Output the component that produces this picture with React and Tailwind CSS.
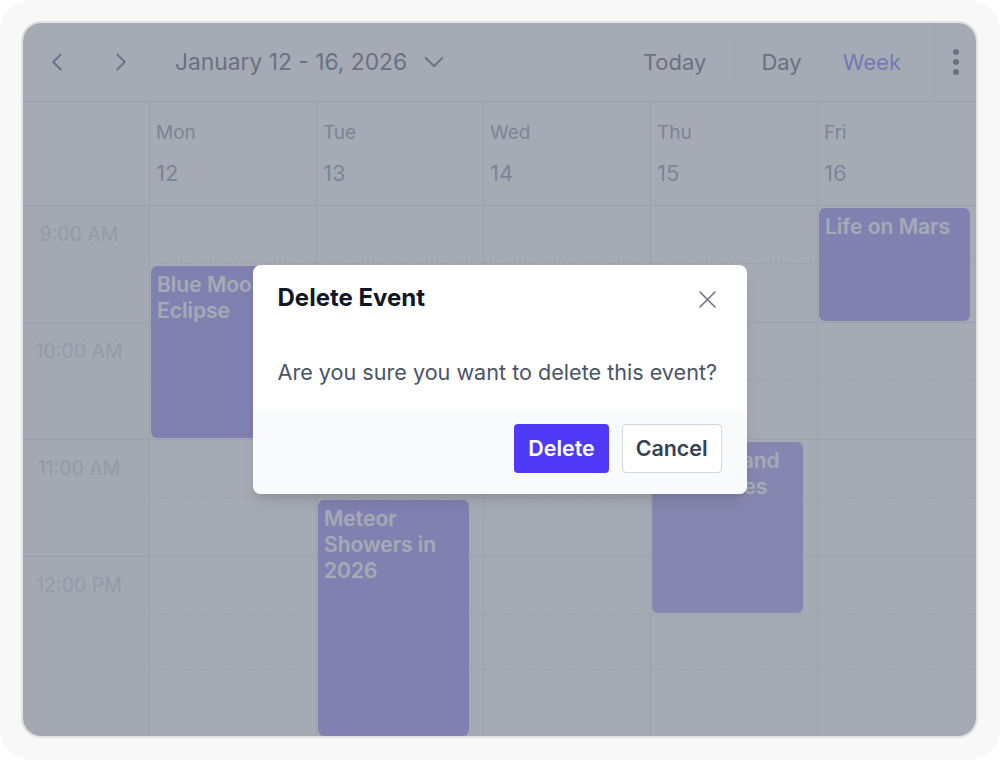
import { ChevronLeft, ChevronRight, ChevronDown } from 'lucide-react'

const HOUR = 117
const START_HOUR = 9

const days = [
  { name: 'Mon', date: 12 },
  { name: 'Tue', date: 13 },
  { name: 'Wed', date: 14 },
  { name: 'Thu', date: 15 },
  { name: 'Fri', date: 16 },
]

const hours = ['9:00 AM', '10:00 AM', '11:00 AM', '12:00 PM']

const events = [
  { day: 0, title: 'Blue Moon Eclipse', start: 9.5, end: 11, tone: 'bg-[#a49af8]' },
  { day: 1, title: 'Meteor Showers in 2026', start: 11.5, end: 13.55, tone: 'bg-[#a49af8]' },
  { day: 2, title: 'Total Solar Eclipse', start: 9.5, end: 11, tone: 'bg-[#a49af8]', narrow: true },
  { day: 3, title: 'Comets and Meteorites', start: 11, end: 12.5, tone: 'bg-[#b0a8f6]' },
  { day: 4, title: 'Life on Mars', start: 9, end: 10, tone: 'bg-[#a49af8]' },
]

// One hour of the grid: a solid line at the bottom, dashed at the half hour.
const HourSlots = ({ last }) =>
  last ? (
    <div className="h-[180px]">
      <div className="h-[58px] border-b border-dashed border-gray-200" />
      <div className="h-[55px] border-b border-dashed border-gray-200" />
    </div>
  ) : (
    <div className="h-[117px] border-b border-gray-200">
      <div className="h-[58px] border-b border-dashed border-gray-200" />
    </div>
  )

const DayColumn = ({ index }) => (
  <div className={`relative h-full shrink-0 ${index < 4 ? 'w-[167px] border-r border-gray-200' : 'flex-1'}`}>
    {hours.map((h, i) => (
      <HourSlots key={h} last={i === hours.length - 1} />
    ))}
    {events
      .filter((e) => e.day === index)
      .map((e) => (
        <div
          key={e.title}
          className={`absolute overflow-hidden rounded-md px-[6px] py-[6px] text-[21px] font-semibold leading-[26px] text-white ${e.tone} ${e.narrow ? 'left-[3px] w-[145px]' : 'left-[1px] w-[151px]'}`}
          style={{ top: (e.start - START_HOUR) * HOUR + 1.5, height: (e.end - e.start) * HOUR - 4 }}
        >
          {e.title}
        </div>
      ))}
  </div>
)

const DeleteDialog = () => (
  <div className="w-[494px] overflow-hidden rounded-lg bg-white shadow-lg">
    <div className="flex items-center justify-between pl-[25px] pr-[31px] pt-[19px]">
      <h2 className="text-[24px] font-bold leading-[28px] text-gray-900">Delete Event</h2>
      <svg width="17" height="17" viewBox="0 0 17 17" className="mt-[3px] text-gray-500" fill="none" stroke="currentColor" strokeWidth="1.5" strokeLinecap="round">
        <path d="M1 1l15 15M16 1L1 16" />
      </svg>
    </div>
    <p className="px-[25px] pb-[25px] pt-[46px] text-[21.6px] leading-[28px] text-gray-600">
      Are you sure you want to delete this event?
    </p>
    <div className="flex justify-end gap-[13px] bg-gray-50 pb-[21px] pl-[25px] pr-[25px] pt-[13px]">
      <button type="button" className="h-[49px] rounded bg-indigo-600 px-[14px] text-[21.4px] font-semibold text-white">
        Delete
      </button>
      <button type="button" className="h-[49px] rounded border border-gray-300 bg-white px-[13px] text-[21.4px] font-semibold text-gray-700">
        Cancel
      </button>
    </div>
  </div>
)

export default function App() {
  return (
    <div className="h-[760px] w-[1000px] bg-white font-['Inter',sans-serif]">
      <div className="h-full rounded-[32px] bg-[#f8f8f8] pl-[21px] pt-[21px]">
        <div className="relative flex h-[717px] w-[957px] flex-col overflow-hidden rounded-[20px] border-2 border-[#e2e2e2] bg-white">
          {/* toolbar */}
          <div className="flex h-[79px] shrink-0 items-center border-b border-gray-200 text-gray-500">
            <button type="button" className="ml-[12px] flex w-[44px] justify-center">
              <ChevronLeft size={30} strokeWidth={1.5} />
            </button>
            <button type="button" className="ml-[20px] flex w-[44px] justify-center">
              <ChevronRight size={30} strokeWidth={1.5} />
            </button>
            <span className="ml-[32px] text-[22.8px]">January 12 - 16, 2026</span>
            <ChevronDown size={34} strokeWidth={1.3} className="ml-[10px]" />
            <div className="flex-1" />
            <span className="pr-[28px] text-[22px]">Today</span>
            <div className="h-[40px] w-px bg-gray-200" />
            <span className="pl-[26px] pr-[20px] text-[22px]">Day</span>
            <span className="pl-[21px] pr-[33px] text-[22px] text-indigo-400">Week</span>
            <div className="flex h-full w-[42px] items-center justify-center border-l border-gray-200">
              <svg width="8" height="28" viewBox="0 0 8 28" fill="currentColor">
                <circle cx="4" cy="4" r="3" />
                <circle cx="4" cy="14" r="3" />
                <circle cx="4" cy="24" r="3" />
              </svg>
            </div>
          </div>

          {/* day headings */}
          <div className="flex h-[104px] shrink-0 border-b border-gray-200">
            <div className="w-[127px] shrink-0 border-r border-gray-200" />
            {days.map((d, i) => (
              <div
                key={d.name}
                className={`shrink-0 pl-[6px] pt-[19px] ${i < 4 ? 'w-[167px] border-r border-gray-200' : 'flex-1'}`}
              >
                <div className="text-[19px] leading-[24px] text-gray-400">{d.name}</div>
                <div className="mt-[14px] text-[22px] leading-[28px] text-gray-400">{d.date}</div>
              </div>
            ))}
          </div>

          {/* time grid */}
          <div className="flex min-h-0 flex-1 overflow-hidden">
            <div className="w-[127px] shrink-0 border-r border-gray-200 bg-gray-50">
              {hours.map((h, i) => (
                <div
                  key={h}
                  className={`h-[117px] pr-[14px] pt-[16px] text-center text-[19.5px] leading-[24px] text-gray-300 ${i < hours.length - 1 ? 'border-b border-gray-200' : ''}`}
                >
                  {h}
                </div>
              ))}
            </div>
            {days.map((d, i) => (
              <DayColumn key={d.name} index={i} />
            ))}
          </div>

          {/* modal backdrop */}
          <div className="absolute inset-0 flex items-center justify-center bg-gray-500/60">
            <DeleteDialog />
          </div>
        </div>
      </div>
    </div>
  )
}
